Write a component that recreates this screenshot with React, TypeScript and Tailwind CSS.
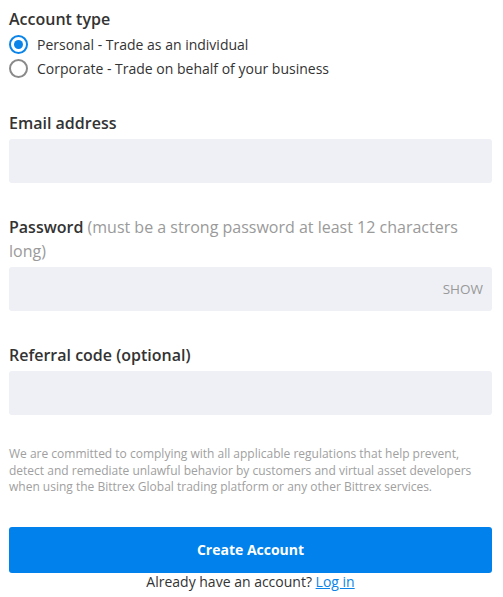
import { useState } from 'react';

function Radio({ checked, label, onClick }: { checked: boolean; label: string; onClick: () => void }) {
  return (
    <label onClick={onClick} className="flex items-center h-6 cursor-pointer">
      <span
        className={`flex items-center justify-center w-[19px] h-[19px] rounded-full border-2 ${
          checked ? 'border-[#0a84e8]' : 'border-[#8a8a8a]'
        }`}
      >
        {checked && <span className="w-[9px] h-[9px] rounded-full bg-[#0a84e8]" />}
      </span>
      <span className="ml-[9px] text-[14px] text-[#333]">{label}</span>
    </label>
  );
}

export default function App() {
  const [type, setType] = useState('personal');
  const [show, setShow] = useState(false);

  return (
    <div
      className="w-[503px] pl-[9px] pr-[11px] pt-[7px] pb-2 bg-white text-[#333]"
      style={{ fontFamily: '"Open Sans", "Liberation Sans", sans-serif' }}
    >
      <h3 className="text-[16px] font-semibold leading-6 text-[#333]">Account type</h3>
      <div className="flex flex-col mt-[1px]">
        <Radio checked={type === 'personal'} label="Personal - Trade as an individual" onClick={() => setType('personal')} />
        <Radio checked={type === 'corporate'} label="Corporate - Trade on behalf of your business" onClick={() => setType('corporate')} />
      </div>

      <label className="block mt-[31px] text-[16px] font-semibold leading-6">Email address</label>
      <input className="block mt-[4px] w-full h-[44px] rounded-[3px] bg-[#eef0f5] px-3 text-sm outline-none" />

      <label className="block mt-[32px] text-[16px] leading-6">
        <span className="font-semibold">Password</span>{' '}
        <span className="text-[#9a9a9a]">(must be a strong password at least 12 characters long)</span>
      </label>
      <div className="relative mt-[4px]">
        <input
          type={show ? 'text' : 'password'}
          className="block w-full h-[44px] rounded-[3px] bg-[#eef0f5] pl-3 pr-16 text-sm outline-none"
        />
        <button
          onClick={() => setShow(!show)}
          className="absolute right-[9px] top-0 h-[44px] text-[13.5px] text-[#999]"
        >
          SHOW
        </button>
      </div>

      <label className="block mt-[32px] text-[16px] font-semibold leading-6">Referral code (optional)</label>
      <input className="block mt-[4px] w-full h-[44px] rounded-[3px] bg-[#eef0f5] px-3 text-sm outline-none" />

      <p className="mt-[31px] text-[12px] leading-[16.5px] text-[#a0a0a0]">
        We are committed to complying with all applicable regulations that help prevent, detect and remediate unlawful
        behavior by customers and virtual asset developers when using the Bittrex Global trading platform or any other
        Bittrex services.
      </p>

      <button className="block mt-[31px] w-full h-[46px] rounded-[3px] bg-[#0081eb] text-white text-[14px] font-bold">
        Create Account
      </button>
      <p className="text-center text-[14px] leading-5 mt-[-1px] text-[#333]">
        Already have an account? <a href="#" className="text-[#0a84e8] underline">Log in</a>
      </p>
    </div>
  );
}
